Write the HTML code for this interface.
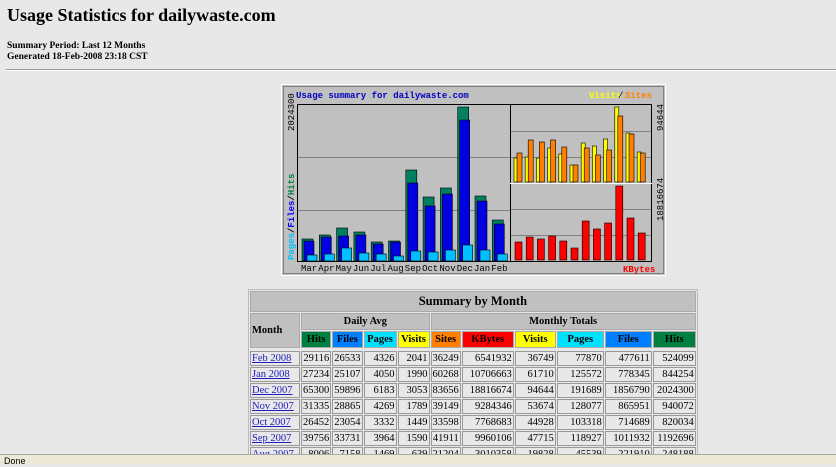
<!DOCTYPE html>
<html><head><style>
body{margin:0;background:#e8e8e8;font-family:"Liberation Serif",serif;color:#000;width:836px;height:463px;overflow:hidden;position:relative}
h2{position:absolute;left:7px;top:5px;margin:0;font-size:18px;font-weight:bold}
.sum{position:absolute;left:7px;top:41px;font-size:9.5px;font-weight:bold;line-height:11px}
.hr{position:absolute;left:6px;top:69px;width:830px;height:0;border-top:1px solid #999;border-bottom:1px solid #fff}
svg{position:absolute;left:281px;top:84px}
table{position:absolute;left:248px;top:289px;border-collapse:separate;border-spacing:1px;font-size:10.5px;table-layout:fixed;background:#e8e8e8;border:1px solid #bbb}
td,th{border:1px solid #999;padding:0 1px;height:13px;line-height:13px;text-align:right;white-space:nowrap;overflow:hidden}
th{background:#c0c0c0;font-weight:bold;text-align:center;border-color:#aaa;height:15px;line-height:15px}
td.m{text-align:left}
td.m a{color:#2020c0}
.status{position:absolute;left:0;top:454px;width:836px;height:9px;background:#ece9d8;border-top:1px solid #aaa;font:9px "Liberation Sans",sans-serif;padding-left:4px;line-height:12px}
</style></head><body>
<h2>Usage Statistics for dailywaste.com</h2>
<div class="sum">Summary Period: Last 12 Months<br>Generated 18-Feb-2008 23:18 CST</div>
<div class="hr"></div>
<svg width="385" height="192" viewBox="0 0 385 192" font-family="Liberation Mono,monospace">
<rect x="0" y="0" width="385" height="192" fill="#c0c0c0"/>
<rect x="0.5" y="0.5" width="384" height="191" fill="none" stroke="#fff"/>
<rect x="2.5" y="2.5" width="380" height="187" fill="none" stroke="#808080"/>
<text x="15" y="14" font-size="9" font-weight="bold" fill="#0000c0">Usage summary for dailywaste.com</text>
<text x="308" y="14" font-size="9" font-weight="bold" fill="#ffff00">Visits</text><text x="337" y="14" font-size="9" fill="#000">/</text><text x="344" y="14" font-size="9" font-weight="bold" fill="#ff8000">Sites</text>
<text x="342" y="188" font-size="9" font-weight="bold" fill="#ff0000">KBytes</text>
<rect x="16.5" y="20.5" width="213" height="157" fill="none" stroke="#000"/>
<rect x="229.5" y="20.5" width="141" height="157" fill="none" stroke="#000"/>
<line x1="229" y1="99.5" x2="371" y2="99.5" stroke="#fff"/>
<line x1="17" y1="73.5" x2="229" y2="73.5" stroke="#808080"/>
<line x1="17" y1="126.5" x2="229" y2="126.5" stroke="#808080"/>
<line x1="230" y1="47.5" x2="370" y2="47.5" stroke="#808080"/>
<line x1="230" y1="73.5" x2="370" y2="73.5" stroke="#808080"/>
<line x1="230" y1="125.5" x2="370" y2="125.5" stroke="#808080"/>
<line x1="230" y1="151.5" x2="370" y2="151.5" stroke="#808080"/>
<text transform="translate(13,47) rotate(-90)" font-size="9" fill="#000">2024300</text>
<text transform="translate(13,176) rotate(-90)" font-size="9" font-weight="bold"><tspan fill="#00c0ff">Pages</tspan><tspan fill="#000">/</tspan><tspan fill="#0000ff">Files</tspan><tspan fill="#000">/</tspan><tspan fill="#008040">Hits</tspan></text>
<text transform="translate(382,47) rotate(-90)" font-size="9" fill="#000">94644</text>
<text transform="translate(382,137) rotate(-90)" font-size="9" fill="#000">18816674</text>
<g id="left" stroke="#000" stroke-width="0.6"></g>
<g id="rt" stroke="#000" stroke-width="0.6"></g>
<g id="lbl" font-size="9" fill="#000"></g>
</svg>
<script>
(function(){var ns="http://www.w3.org/2000/svg";
function r(g,x,y,w,b,f){var e=document.createElementNS(ns,"rect");e.setAttribute("x",x);e.setAttribute("y",y);e.setAttribute("width",w);e.setAttribute("height",b-y);e.setAttribute("fill",f);g.appendChild(e);}
var L=document.getElementById("left"),R=document.getElementById("rt"),T=document.getElementById("lbl");
var h=[155,151,144,148,158,157,86,113,104,23,112,136],f=[157,153,152,151,160,158,99,122,110,36,117,140],p=[171,170,164,169,170,172,167,168,166,161,166,170];
var v=[74,73,74,64,70,81,59,62,55,23,49,68],s=[69,56,58,56,63,81,64,71,66,32,50,69],k=[158,153,155,152,157,164,137,145,139,102,134,149];
var m=["Mar","Apr","May","Jun","Jul","Aug","Sep","Oct","Nov","Dec","Jan","Feb"];
for(var i=0;i<12;i++){var x=21+17.3*i;
r(L,x,h[i],11,177,"#008060");r(L,x+2,f[i],10,177,"#0000e0");r(L,x+5,p[i],10,177,"#00c0ff");
var t=document.createElementNS(ns,"text");t.setAttribute("x",x-1);t.setAttribute("y",187);t.textContent=m[i];T.appendChild(t);
var y=233+11.2*i;r(R,y,v[i],4,98,"#ffff00");r(R,y+3,s[i],5,98,"#ff8000");r(R,y+1,k[i],7,176,"#ff0000");}
})();
</script>
<table>
<colgroup><col style="width:50px"><col style="width:30px"><col style="width:30px"><col style="width:33px"><col style="width:32px"><col style="width:30px"><col style="width:52px"><col style="width:41px"><col style="width:47px"><col style="width:47px"><col style="width:43px"></colgroup>
<tr><th colspan="11" style="font-size:12.5px;height:19px;line-height:19px">Summary by Month</th></tr>
<tr><th rowspan="2" style="text-align:left">Month</th><th colspan="4">Daily Avg</th><th colspan="6">Monthly Totals</th></tr>
<tr><th style="background:#008040">Hits</th><th style="background:#0080ff">Files</th><th style="background:#00e0ff">Pages</th><th style="background:#ffff00">Visits</th><th style="background:#ff8000">Sites</th><th style="background:#ff0000">KBytes</th><th style="background:#ffff00">Visits</th><th style="background:#00e0ff">Pages</th><th style="background:#0080ff">Files</th><th style="background:#008040">Hits</th></tr>
<tr><td colspan="11" style="border:0;height:1px;line-height:1px;padding:0"></td></tr>
<tr><td class="m"><a href="#">Feb 2008</a></td><td>29116</td><td>26533</td><td>4326</td><td>2041</td><td>36249</td><td>6541932</td><td>36749</td><td>77870</td><td>477611</td><td>524099</td></tr>
<tr><td class="m"><a href="#">Jan 2008</a></td><td>27234</td><td>25107</td><td>4050</td><td>1990</td><td>60268</td><td>10706663</td><td>61710</td><td>125572</td><td>778345</td><td>844254</td></tr>
<tr><td class="m"><a href="#">Dec 2007</a></td><td>65300</td><td>59896</td><td>6183</td><td>3053</td><td>83656</td><td>18816674</td><td>94644</td><td>191689</td><td>1856790</td><td>2024300</td></tr>
<tr><td class="m"><a href="#">Nov 2007</a></td><td>31335</td><td>28865</td><td>4269</td><td>1789</td><td>39149</td><td>9284346</td><td>53674</td><td>128077</td><td>865951</td><td>940072</td></tr>
<tr><td class="m"><a href="#">Oct 2007</a></td><td>26452</td><td>23054</td><td>3332</td><td>1449</td><td>33598</td><td>7768683</td><td>44928</td><td>103318</td><td>714689</td><td>820034</td></tr>
<tr><td class="m"><a href="#">Sep 2007</a></td><td>39756</td><td>33731</td><td>3964</td><td>1590</td><td>41911</td><td>9960106</td><td>47715</td><td>118927</td><td>1011932</td><td>1192696</td></tr>
<tr><td class="m"><a href="#">Aug 2007</a></td><td>8006</td><td>7158</td><td>1469</td><td>639</td><td>21204</td><td>3010358</td><td>19828</td><td>45539</td><td>221910</td><td>248188</td></tr>
</table>
<div class="status">Done</div>
</body></html>
